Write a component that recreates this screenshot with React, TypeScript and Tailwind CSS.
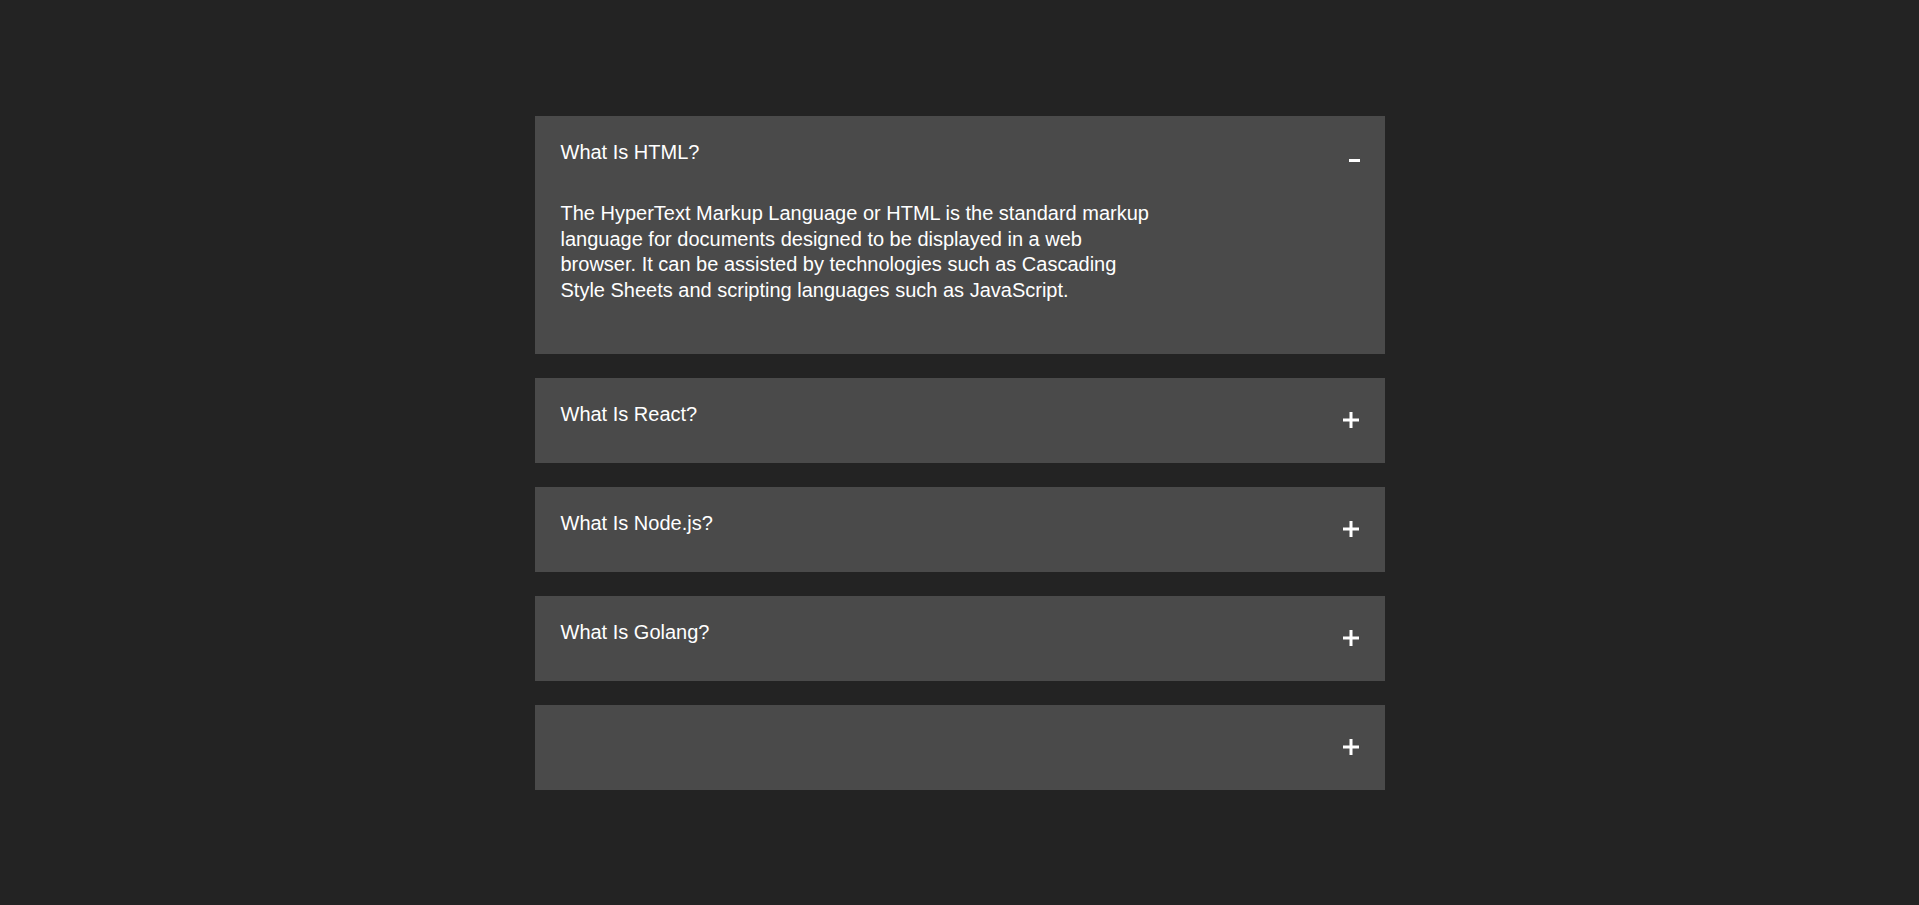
import React, { useState } from "react";

interface FaqItem {
  question: string;
  answer: string;
}

const items: FaqItem[] = [
  {
    question: "What Is HTML?",
    answer:
      "The HyperText Markup Language or HTML is the standard markup language for documents designed to be displayed in a web browser. It can be assisted by technologies such as Cascading Style Sheets and scripting languages such as JavaScript.",
  },
  {
    question: "What Is React?",
    answer:
      "React is a free and open-source front-end JavaScript library for building user interfaces based on components.",
  },
  {
    question: "What Is Node.js?",
    answer:
      "Node.js is a cross-platform, open-source JavaScript runtime environment that runs on the V8 engine.",
  },
  {
    question: "What Is Golang?",
    answer:
      "Go is a statically typed, compiled programming language designed at Google.",
  },
  { question: "", answer: "" },
];

const PlusIcon = () => (
  <svg width="16" height="16" viewBox="0 0 16 16" className="mr-[1px]">
    <rect x="6.5" y="0" width="3" height="16" fill="white" />
    <rect x="0" y="6.5" width="16" height="3" fill="white" />
  </svg>
);

const MinusIcon = () => (
  <svg width="11" height="3" viewBox="0 0 11 3" className="mt-[9px]">
    <rect x="0" y="0" width="11" height="3" fill="white" />
  </svg>
);

export default function App() {
  const [openIndex, setOpenIndex] = useState<number | null>(0);

  return (
    <div className="min-h-screen bg-[#232323] pt-[116px] pb-[100px] font-['Liberation_Sans',Arial,sans-serif] text-white">
      <div className="mx-auto flex w-[850px] flex-col gap-6">
        {items.map((item, index) => {
          const isOpen = openIndex === index;
          return (
            <div key={index} className="bg-[#4a4a4a]">
              {/* Header */}
              <button
                onClick={() => setOpenIndex(isOpen ? null : index)}
                className="flex h-[85px] w-full items-start justify-between pl-[26px] pr-[25px] pt-[24.5px] text-left"
              >
                <span className="text-[20px] leading-[23px]">
                  {item.question}
                </span>
                <span className="mt-[9.5px] flex h-[16px] w-[18px] justify-end">
                  {isOpen ? <MinusIcon /> : <PlusIcon />}
                </span>
              </button>

              {/* Body */}
              {isOpen && (
                <div className="px-[26px]">
                  <p className="mb-[51px] max-w-[600px] text-[20px] leading-[25.5px]">
                    {item.answer}
                  </p>
                </div>
              )}
            </div>
          );
        })}
      </div>
    </div>
  );
}
